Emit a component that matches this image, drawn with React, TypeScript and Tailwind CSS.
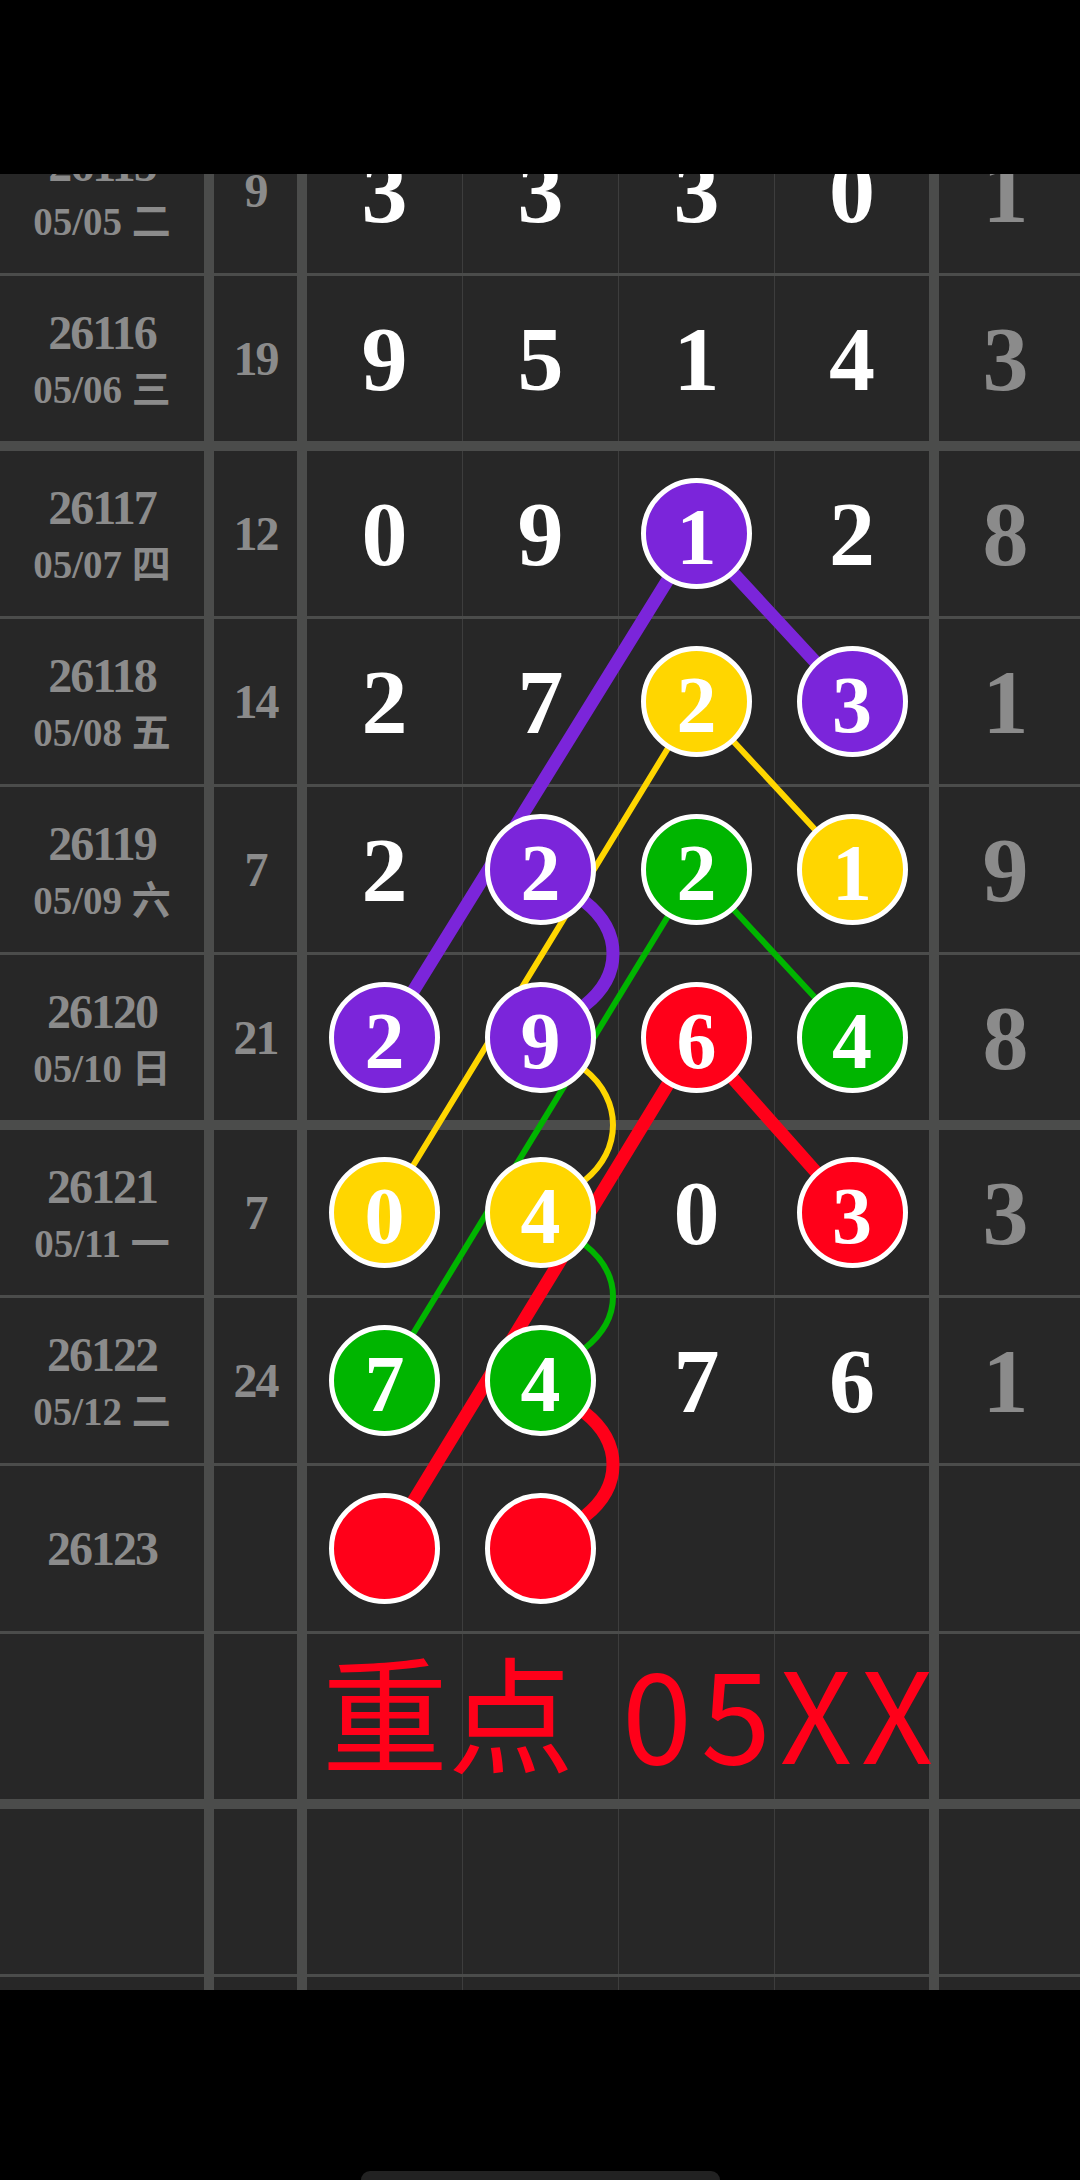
import React from "react";

type Ball = { n: string; c: string };
type Cell = string | Ball | null;

const P = "#7b25da";
const Y = "#ffd600";
const G = "#00b500";
const R = "#ff0019";

interface Row {
  issue?: string;
  date?: string;
  sum?: string;
  cells: Cell[];
  last?: string;
  sep: "thin" | "thick";
  text?: boolean;
}

const rows: Row[] = [
  { issue: "26115", date: "05/05 二", sum: "9", cells: ["3", "3", "3", "0"], last: "1", sep: "thin" },
  { issue: "26116", date: "05/06 三", sum: "19", cells: ["9", "5", "1", "4"], last: "3", sep: "thick" },
  { issue: "26117", date: "05/07 四", sum: "12", cells: ["0", "9", { n: "1", c: P }, "2"], last: "8", sep: "thin" },
  { issue: "26118", date: "05/08 五", sum: "14", cells: ["2", "7", { n: "2", c: Y }, { n: "3", c: P }], last: "1", sep: "thin" },
  { issue: "26119", date: "05/09 六", sum: "7", cells: ["2", { n: "2", c: P }, { n: "2", c: G }, { n: "1", c: Y }], last: "9", sep: "thin" },
  { issue: "26120", date: "05/10 日", sum: "21", cells: [{ n: "2", c: P }, { n: "9", c: P }, { n: "6", c: R }, { n: "4", c: G }], last: "8", sep: "thick" },
  { issue: "26121", date: "05/11 一", sum: "7", cells: [{ n: "0", c: Y }, { n: "4", c: Y }, "0", { n: "3", c: R }], last: "3", sep: "thin" },
  { issue: "26122", date: "05/12 二", sum: "24", cells: [{ n: "7", c: G }, { n: "4", c: G }, "7", "6"], last: "1", sep: "thin" },
  { issue: "26123", cells: [{ n: "", c: R }, { n: "", c: R }, null, null], sep: "thin" },
  { cells: [null, null, null, null], sep: "thick", text: true },
  { cells: [null, null, null, null], sep: "thin" },
  { cells: [null, null, null, null], sep: "thin" },
];

const serif = { fontFamily: '"Liberation Serif", "Noto Sans CJK SC", serif' } as const;

function DigitCell({ cell, w }: { cell: Cell; w: string }) {
  return (
    <div className={`${w} h-full flex items-center justify-center`}>
      {cell === null ? null : typeof cell === "string" ? (
        <span className="text-[92px] leading-none font-bold text-white" style={serif}>
          {cell}
        </span>
      ) : (
        <div
          className="relative z-20 w-[111px] h-[111px] rounded-full border-[5px] border-white flex items-center justify-center"
          style={{ backgroundColor: cell.c }}
        >
          <span className="text-[80px] leading-none font-bold text-white mt-[6px]" style={serif}>
            {cell.n}
          </span>
        </div>
      )}
    </div>
  );
}

function TableRow({ row }: { row: Row }) {
  return (
    <>
      <div className="relative flex h-[165px] bg-[#272727]">
        <div className="w-[204px] h-full flex flex-col items-center justify-center gap-[13px] text-[#8b8b8b] font-bold" style={serif}>
          {row.issue && <span className="text-[48px] leading-none tracking-[-2px]">{row.issue}</span>}
          {row.date && <span className="text-[39px] leading-none">{row.date}</span>}
        </div>
        <div className="w-[10px] h-full bg-[#4b4c4b]" />
        <div className="w-[83px] h-full flex items-center justify-center text-[#8b8b8b] font-bold" style={serif}>
          {row.sum && <span className="text-[48px] leading-none tracking-[-2px]">{row.sum}</span>}
        </div>
        <div className="w-[10px] h-full bg-[#4b4c4b]" />
        <DigitCell cell={row.cells[0]} w="w-[155px]" />
        <div className="w-px h-full bg-[#3d3d3d]" />
        <DigitCell cell={row.cells[1]} w="w-[155px]" />
        <div className="w-px h-full bg-[#3d3d3d]" />
        <DigitCell cell={row.cells[2]} w="w-[155px]" />
        <div className="w-px h-full bg-[#3d3d3d]" />
        <DigitCell cell={row.cells[3]} w="w-[154px]" />
        <div className="w-[10px] h-full bg-[#4b4c4b]" />
        <div className="w-[141px] h-full flex items-center justify-center pr-[8px]">
          {row.last && (
            <span className="text-[92px] leading-none font-bold text-[#8b8b8b]" style={serif}>
              {row.last}
            </span>
          )}
        </div>
        {row.text && (
          <div
            className="absolute left-[322px] top-0 h-full flex items-center pb-[16px] z-20 text-[#ff0019] whitespace-nowrap"
            style={{ fontFamily: '"Noto Sans CJK SC", "Noto Sans", sans-serif' }}
          >
            <span className="text-[126px] leading-none">重点</span>
            <span className="text-[126px] leading-none ml-[48px] tracking-[9px]">05XX</span>
          </div>
        )}
      </div>
      <div className={row.sep === "thick" ? "h-[10px] bg-[#4b4c4b]" : "h-[3px] bg-[#4b4c4b]"} />
    </>
  );
}

const cx = [384.5, 540.5, 696.5, 852];
const cy = { r17: 533.5, r18: 701.5, r19: 869.5, r20: 1037.5, r21: 1212.5, r22: 1380.5, r23: 1548.5 };

function arc(y1: number, y2: number) {
  const x = cx[1];
  return `M ${x + 44} ${y1 + 32} C ${x + 82} ${y1 + 62}, ${x + 82} ${y2 - 62}, ${x + 44} ${y2 - 32}`;
}

function Connectors() {
  return (
    <svg
      className="absolute left-0 top-0 z-10 pointer-events-none"
      width={1080}
      height={1900}
      viewBox="0 108 1080 1900"
      fill="none"
      strokeLinecap="round"
    >
      <line x1={cx[2]} y1={cy.r17} x2={cx[3]} y2={cy.r18} stroke={P} strokeWidth={13} />
      <line x1={cx[2]} y1={cy.r17} x2={cx[0]} y2={cy.r20} stroke={P} strokeWidth={13} />
      <path d={arc(cy.r19, cy.r20)} stroke={P} strokeWidth={13} />

      <line x1={cx[2]} y1={cy.r18} x2={cx[3]} y2={cy.r19} stroke={Y} strokeWidth={6} />
      <line x1={cx[2]} y1={cy.r18} x2={cx[0]} y2={cy.r21} stroke={Y} strokeWidth={6} />
      <path d={arc(cy.r20, cy.r21)} stroke={Y} strokeWidth={6} />

      <line x1={cx[2]} y1={cy.r19} x2={cx[3]} y2={cy.r20} stroke={G} strokeWidth={6} />
      <line x1={cx[2]} y1={cy.r19} x2={cx[0]} y2={cy.r22} stroke={G} strokeWidth={6} />
      <path d={arc(cy.r21, cy.r22)} stroke={G} strokeWidth={6} />

      <line x1={cx[2]} y1={cy.r20} x2={cx[3]} y2={cy.r21} stroke={R} strokeWidth={13} />
      <line x1={cx[2]} y1={cy.r20} x2={cx[0]} y2={cy.r23} stroke={R} strokeWidth={13} />
      <path d={arc(cy.r22, cy.r23)} stroke={R} strokeWidth={13} />
    </svg>
  );
}

export default function App() {
  return (
    <div className="w-[1080px] h-[2180px] bg-black flex flex-col overflow-hidden">
      <div className="h-[174px] bg-black shrink-0" />
      <div className="h-[1816px] shrink-0 overflow-hidden bg-[#272727]">
        <div className="relative -mt-[66px]">
          <Connectors />
          {rows.map((r, i) => (
            <TableRow key={i} row={r} />
          ))}
        </div>
      </div>
      <div className="h-[190px] shrink-0 bg-black flex items-end justify-center overflow-hidden">
        <div className="w-[359px] h-[18px] rounded-full bg-[#222222] -mb-[9px]" />
      </div>
    </div>
  );
}
